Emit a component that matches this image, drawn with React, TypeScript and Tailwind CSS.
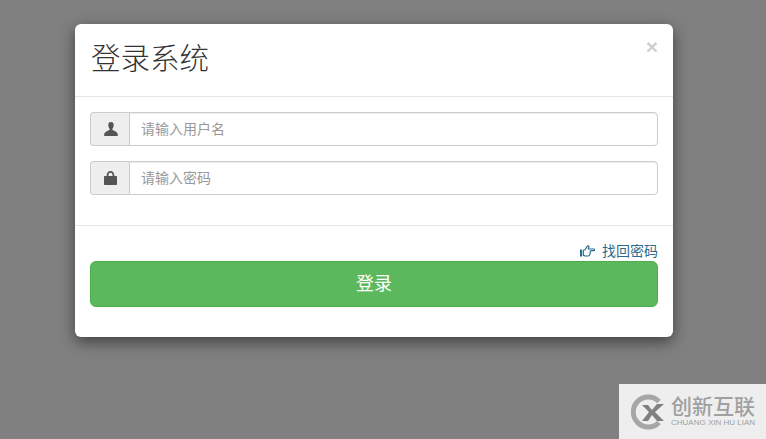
import React from "react";

const cjk = "font-['Liberation_Sans','Noto_Sans_CJK_SC',sans-serif]";

function Field({ placeholder, icon }: { placeholder: string; icon: React.ReactNode }) {
  return (
    <div className="flex h-[34px]">
      <div className="flex w-[39px] items-center justify-center rounded-l-[4px] border border-r-0 border-[#cccccc] bg-[#eeeeee] pl-[1px] text-[#555555]">
        {icon}
      </div>
      <div className="flex flex-1 items-center rounded-r-[4px] border border-[#cccccc] bg-white pl-[11px] pr-3 text-[14px] text-[#999999] shadow-[inset_0_1px_1px_rgba(0,0,0,0.075)]">
        {placeholder}
      </div>
    </div>
  );
}

export default function App() {
  return (
    <div className={`relative h-[439px] w-[766px] overflow-hidden bg-[#808080] pl-[75px] pt-[24px] ${cjk}`}>
      <div className="h-[313px] w-[598px] rounded-[6px] bg-white shadow-[0_5px_15px_rgba(0,0,0,0.5)]">
        <div className="flex h-[73px] items-start justify-between border-b border-[#e5e5e5] pl-[16px] pr-[15px]">
          <h1 className="pt-[14px] text-[29.5px] leading-[42px] font-light text-[#333333]">登录系统</h1>
          <span className="pt-[12px] text-[21px] leading-[21px] font-bold text-[#cfcfcf]">×</span>
        </div>
        <div className="flex h-[129px] flex-col gap-[15px] border-b border-[#e5e5e5] px-[15px] pt-[15px]">
          <Field
            placeholder="请输入用户名"
            icon={
              <svg width="14" height="14" viewBox="0 0 14 14" fill="currentColor">
                <path d="M7 0C5.200 0 4.300 1.300 4.300 3c0 1.500.5 2.800 1.300 3.700.2.500.1 1-.3 1.300C4 9 .6 9.700.2 12.200V14h13.600v-1.800C13.400 9.700 10 9 8.700 8c-.4-.3-.5-.8-.3-1.300C9.200 5.800 9.700 4.500 9.700 3 9.700 1.300 8.800 0 7 0z" />
              </svg>
            }
          />
          <Field
            placeholder="请输入密码"
            icon={
              <svg width="13" height="14" viewBox="0 0 13 14" fill="currentColor">
                <path fillRule="evenodd" d="M2.700 5V4C2.700 1.700 4.300 0 6.500 0s3.800 1.700 3.800 4v1H12c.6 0 1 .4 1 1v7c0 .6-.4 1-1 1H1c-.6 0-1-.4-1-1V6c0-.6.4-1 1-1h1.700zm1.800 0h4V4c0-1.300-.8-2.200-2-2.200S4.500 2.700 4.500 4v1z" />
              </svg>
            }
          />
        </div>
        <div className="px-[15px] pt-[15px]">
          <div className="flex h-[20px] items-center justify-end gap-[7px] text-[14px] leading-[20px] text-[#2a6a8f]">
            <svg width="15" height="13" viewBox="0 0 15 13" fill="none" stroke="currentColor" strokeWidth="1.200">
              <path d="M1 4.500v7" strokeWidth="2" />
              <path d="M3.300 5h1.500l2.700-4c.7-.6 1.600 0 1.300.9L8.300 4H14c.8 0 .8 1.600 0 1.600H10.500M10 5.600c.6 2 0 5.400-1.800 5.400H5.500c-1 0-1.300-.5-2.200-.7V5" />
            </svg>
            <span>找回密码</span>
          </div>
          <button className="flex h-[46px] w-full items-center justify-center rounded-[6px] border border-[#4cae4c] bg-[#5cb85c] text-[18px] text-white">
            登录
          </button>
        </div>
      </div>

      <div className="absolute bottom-0 right-0 flex h-[55px] w-[147px] items-center gap-[4px] bg-[#eeeeee] pl-[12px]">
        <svg width="36" height="36" viewBox="0 0 36 36" className="shrink-0">
          <path d="M28 7.500A15 15 0 1 0 28 28.500" fill="none" stroke="#a6a6a6" strokeWidth="5" />
          <path d="M11 11h6l4 5 5-6h7l-9 8 9 9h-7l-5-6-4 6h-6l7-9z" fill="#808080" />
        </svg>
        <div className="flex flex-col text-[#a0a0a0]">
          <span className="text-[21px] leading-[22px] font-medium">创新互联</span>
          <span className="text-[8px] leading-[9px] whitespace-nowrap">CHUANG XIN HU LIAN</span>
        </div>
      </div>
    </div>
  );
}
